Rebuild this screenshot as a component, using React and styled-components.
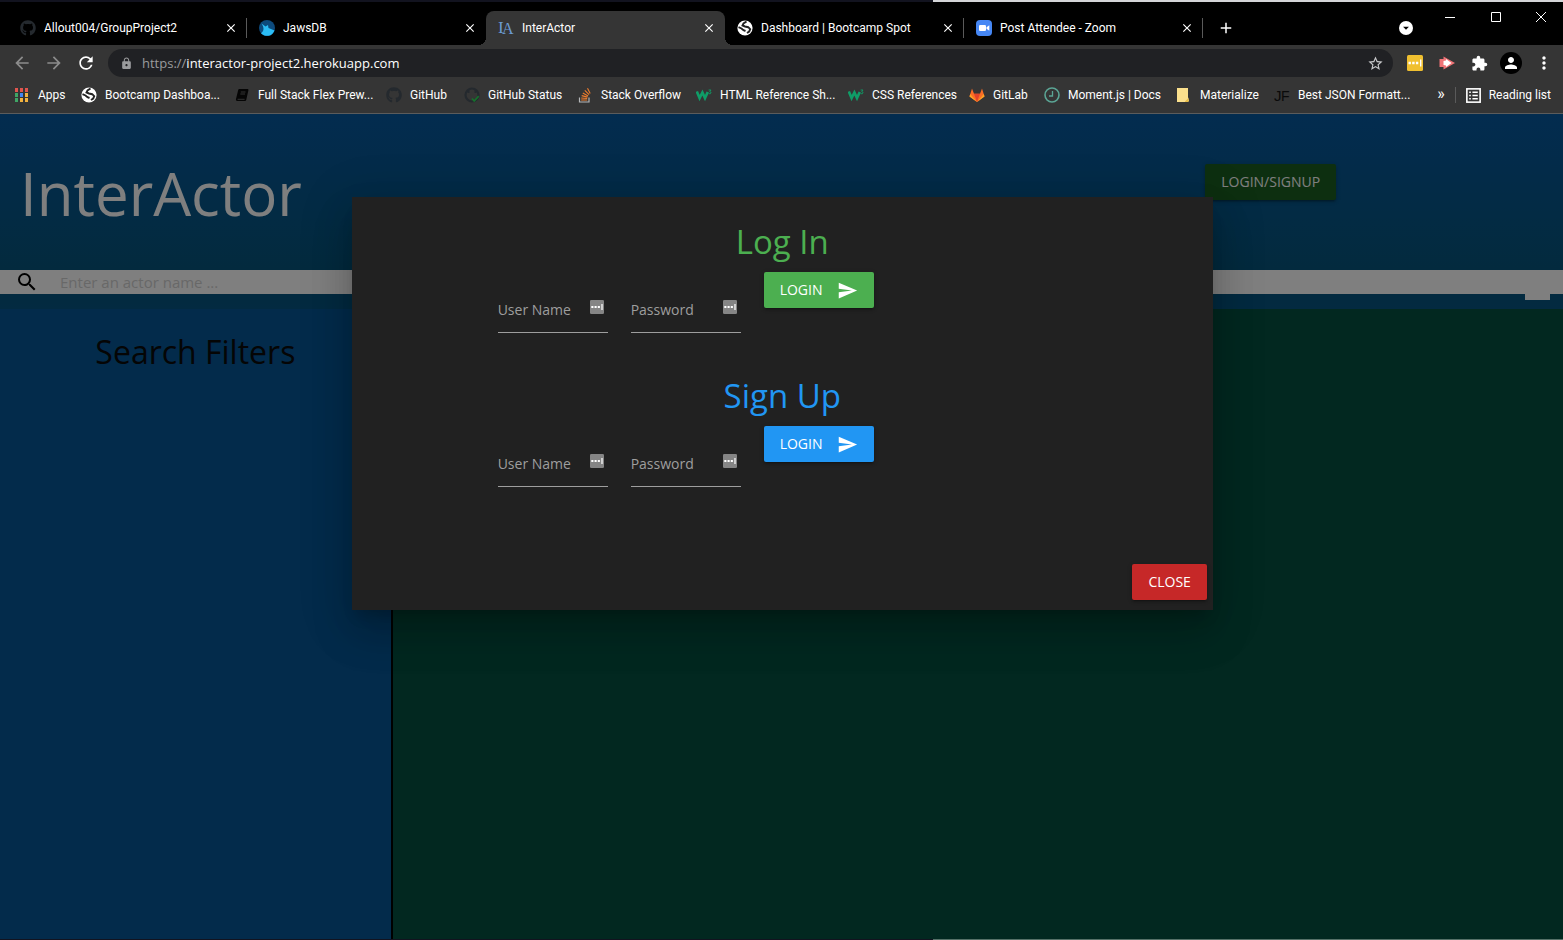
import React from "react";
import styled, { createGlobalStyle } from "styled-components";
import {
  MdArrowBack, MdArrowForward, MdRefresh, MdLock, MdStarBorder, MdExtension,
  MdPerson, MdMoreVert, MdClose, MdAdd, MdSend, MdSearch, MdArrowDropDown,
} from "react-icons/md";
import { FaGithub } from "react-icons/fa";

const GlobalStyle = createGlobalStyle`
  *, *::before, *::after { box-sizing: border-box; }
  html, body, #root { height: 100%; }
  body {
    margin: 0;
    background: #000;
    font-family: "Open Sans", "Noto Sans", sans-serif;
    overflow: hidden;
  }
  button, input { font-family: inherit; }
  button { border: 0; padding: 0; cursor: pointer; }
  a { color: inherit; text-decoration: none; }
  svg { display: block; flex: none; }
`;

const Screen = styled.div`
  display: flex;
  flex-direction: column;
  height: 100%;
`;

const EdgeStrip = styled.div`
  flex: none;
  height: ${(p) => p.$height}px;
  background: linear-gradient(to right, #12131f 59.7%, ${(p) => p.$light} 59.7%);
`;

/* ---------- browser frame ---------- */

const TabStrip = styled.div`
  display: flex;
  flex: none;
  height: 43px;
  padding: 9px 0 0 8px;
  background: #000;
`;

const Tab = styled.div`
  position: relative;
  display: flex;
  align-items: center;
  flex: 0 1 239px;
  gap: 8px;
  padding-left: 12px;
  border-radius: 8px 8px 0 0;
  background: ${(p) => (p.$active ? "#353535" : "transparent")};
  color: #fff;
  font-family: Roboto, "Open Sans", sans-serif;
  font-size: 12px;

  &::before, &::after {
    content: "";
    display: ${(p) => (p.$active ? "block" : "none")};
    position: absolute;
    bottom: 0;
    width: 8px;
    height: 8px;
  }
  &::before {
    left: -8px;
    background: radial-gradient(circle at 0 0, transparent 8px, #353535 8px);
  }
  &::after {
    right: -8px;
    background: radial-gradient(circle at 100% 0, transparent 8px, #353535 8px);
  }
`;

const TabTitle = styled.span`
  flex: 1;
  white-space: nowrap;
  overflow: hidden;
`;

const Divider = styled.span`
  flex: none;
  align-self: center;
  width: 1px;
  height: ${(p) => p.$height}px;
  background: ${(p) => (p.$hidden ? "transparent" : "#5a5a5a")};
`;

const IconButton = styled.button`
  display: flex;
  align-items: center;
  justify-content: center;
  flex: none;
  width: ${(p) => p.$width}px;
  background: transparent;
  color: ${(p) => p.$color || "#fff"};
`;

const NewTab = styled(IconButton)`
  align-self: center;
  margin-left: 11px;
`;

const WindowControls = styled.div`
  display: flex;
  align-items: center;
  margin-left: auto;
`;

const CaptionButtons = styled.div`
  display: flex;
  align-self: flex-start;
  height: 12px;
  margin-left: 14px;
`;

const TabSearch = styled.button`
  display: flex;
  align-items: center;
  justify-content: center;
  width: 14px;
  height: 14px;
  border-radius: 50%;
  background: #fff;
  color: #000;
`;

const Toolbar = styled.div`
  display: flex;
  align-items: center;
  flex: none;
  height: 36px;
  padding: 0 3px 0 6px;
  background: #353535;
`;

const AddressBar = styled.div`
  display: flex;
  align-items: center;
  flex: 1;
  height: 28px;
  margin: 0 6px;
  padding: 0 9px 0 12px;
  gap: 9px;
  border-radius: 14px;
  background: #202124;
  color: #9a9b9d;
  font-size: 13px;
`;

const Url = styled.span`
  flex: 1;
  b { color: #fff; font-weight: 400; }
`;

const Avatar = styled.span`
  display: flex;
  align-items: center;
  justify-content: center;
  width: 22px;
  height: 22px;
  border-radius: 50%;
  background: #000;
`;

const BookmarkBar = styled.nav`
  display: flex;
  align-items: center;
  flex: none;
  height: 33px;
  padding: 0 12px 4px 13px;
  border-bottom: 1px solid #5c5c5c;
  background: #353535;
  color: #fff;
  font-family: Roboto, "Open Sans", sans-serif;
  font-size: 12px;
  white-space: nowrap;
`;

const Bookmark = styled.a`
  display: flex;
  align-items: center;
  flex: none;
  gap: 8px;
  width: ${(p) => (p.$width ? `${p.$width}px` : "auto")};
`;

const BookmarkEnd = styled.div`
  display: flex;
  align-items: center;
  gap: 10px;
  margin-left: auto;
`;

const More = styled.span`
  font-size: 16px;
  line-height: 16px;
  padding-bottom: 2px;
`;

/* ---------- InterActor page ---------- */

const Page = styled.main`
  position: relative;
  display: flex;
  flex-direction: column;
  flex: 1;
`;

const Header = styled.header`
  flex: none;
  height: 195px;
  background: linear-gradient(#06589f, #06557c 156px, #065482);
`;

const Banner = styled.div`
  display: grid;
  grid-template-columns: 3fr 1fr;
  height: 156px;
  padding: 1px 0 0 20px;
  color: #fff;
`;

const SiteTitle = styled.h1`
  margin: 0;
  align-self: center;
  font-size: 60px;
  line-height: 72px;
  font-weight: 400;
`;

const BannerAction = styled.div`
  padding: 49px 0 0 28px;
`;

const SearchBar = styled.label`
  display: flex;
  align-items: center;
  height: 24px;
  padding-left: 15px;
  gap: 21px;
  background: #fff;
  color: #000;
`;

const SearchInput = styled.input`
  flex: 1;
  height: 24px;
  padding: 0;
  border: 0;
  outline: 0;
  background: transparent;
  font-size: 15px;
  &::placeholder { color: #d1d1d1; opacity: 1; }
`;

const SearchTab = styled.div`
  width: 25px;
  height: 6px;
  margin: 0 13px 0 auto;
  background: #fff;
`;

const Body = styled.div`
  display: grid;
  grid-template-columns: 1fr 3fr;
  flex: 1;
`;

const Sidebar = styled.aside`
  background: #065696;
`;

const Results = styled.section`
  border-left: 2px solid #000;
  background: #045040;
`;

const FiltersTitle = styled.h2`
  margin: 21px 0;
  font-size: 32px;
  line-height: 43px;
  font-weight: 400;
  text-align: center;
  color: #0a0a0a;
`;

const Overlay = styled.div`
  position: absolute;
  inset: 0;
  background: rgba(0, 0, 0, 0.5);
`;

const Modal = styled.div`
  display: flex;
  flex-direction: column;
  width: 55.1%;
  height: 50%;
  margin: 83px 0 0 22.5%;
  padding: 23px 6px 10px 24px;
  background: #212121;
  box-shadow: 0 24px 38px 3px rgba(0, 0, 0, 0.14),
    0 9px 46px 8px rgba(0, 0, 0, 0.12), 0 11px 15px -7px rgba(0, 0, 0, 0.2);
`;

const Form = styled.form`
  height: 154px;
  padding-right: 18px;
`;

const FormTitle = styled.h2`
  margin: 0 0 9px;
  font-size: 33px;
  line-height: 43px;
  font-weight: 400;
  text-align: center;
  color: ${(p) => p.$color};
`;

const FormRow = styled.div`
  display: flex;
  align-items: flex-start;
  gap: 23px;
  margin-left: 15%;
`;

const Field = styled.div`
  display: grid;
  grid-template: 45px / 1fr;
  width: 110px;
  margin-top: 16px;
  > * { grid-area: 1 / 1; }
`;

const FieldLabel = styled.label`
  margin-top: 12px;
  color: #9e9e9e;
  font-size: 14px;
  line-height: 20px;
  pointer-events: none;
`;

const FieldInput = styled.input`
  width: 100%;
  height: 45px;
  padding: 0;
  border: 0;
  border-bottom: 1px solid #9e9e9e;
  outline: 0;
  background: transparent;
  color: #fff;
  font-size: 14px;
`;

const FieldIcon = styled.span`
  justify-self: end;
  margin: 12px 4px 0 0;
`;

const Button = styled.button`
  display: inline-flex;
  align-items: center;
  gap: 15px;
  height: 36px;
  padding: 0 16px;
  border-radius: 2px;
  background: ${(p) => p.$color};
  box-shadow: 0 2px 2px 0 rgba(0, 0, 0, 0.14),
    0 3px 1px -2px rgba(0, 0, 0, 0.12), 0 1px 5px 0 rgba(0, 0, 0, 0.2);
  color: #fff;
  font-size: 14px;
  font-weight: 500;
  line-height: 20px;
  text-transform: uppercase;
`;

const ModalFooter = styled.div`
  display: flex;
  justify-content: flex-end;
  margin-top: auto;
`;

/* ---------- icons ---------- */

const JawsIcon = () => (
  <svg width="16" height="16" viewBox="0 0 16 16">
    <circle cx="8" cy="8" r="8" fill="#0d4a7c" />
    <path d="M2.500 3.500 6.500 6.500 9 5l.5 3 6 2.500A8 8 0 0 1 2 13.200C5 11 5.500 8 2.500 3.500Z" fill="#2bbcf5" />
  </svg>
);

const GlobeIcon = ({ size = 15 }) => (
  <svg width={size} height={size} viewBox="0 0 16 16">
    <circle cx="8" cy="8" r="7.600" fill="#fff" />
    <path d="M9.500 1.500 6.500 3.500 5.500 5.500l2.500 1 3.200.7 2 2-1 2.300-2.200 1.500M1.500 7.200l3 1.300 2 1.700L8.500 11" fill="none" stroke="#222" strokeWidth="1.900" />
  </svg>
);

const ActorIcon = () => (
  <svg width="16" height="26" viewBox="0 0 16 26" fill="#6c9bd2" fontFamily="Liberation Serif, serif">
    <text x="0" y="18" fontSize="17">I</text>
    <text x="4" y="19" fontSize="16">A</text>
  </svg>
);

const FormatterIcon = () => (
  <svg width="16" height="24" viewBox="0 0 16 24" fill="#0a0a0a" fontFamily="Liberation Sans, sans-serif">
    <text x="0" y="18" fontSize="15">J</text>
    <text x="7" y="18" fontSize="14">F</text>
  </svg>
);

const ZoomIcon = () => (
  <svg width="16" height="16" viewBox="0 0 16 16">
    <rect width="16" height="16" rx="4" fill="#4687f4" />
    <rect x="3" y="5" width="7" height="6" rx="1.300" fill="#fff" />
    <path d="m10.500 7.200 2.800-1.900v5.400l-2.800-1.900Z" fill="#fff" />
  </svg>
);

const AppsIcon = () => {
  const colors = ["#e0554e", "#e0554e", "#e0554e", "#3fa565", "#4285f4", "#f3b23e", "#3fa565", "#f3b23e", "#f3b23e"];
  return (
    <svg width="17" height="16" viewBox="0 0 17 16">
      {colors.map((c, i) => (
        <rect key={i} x={2 + (i % 3) * 5} y={1 + Math.floor(i / 3) * 5} width="3" height="4" fill={c} />
      ))}
    </svg>
  );
};

const BookIcon = () => (
  <svg width="15" height="16" viewBox="0 0 15 16">
    <path d="M4.300 2h8.200q1.200 0 .9 1.200L11.200 13q-.3 1-1.300 1H2q-1.600-.3-1-2L3.200 3q.2-1 1.100-1Z" fill="#050505" />
    <path d="M5.800 5h4.700M5.300 7h4.700M2.600 12.300h7" fill="none" stroke="#3f3f3f" strokeWidth=".8" />
  </svg>
);

const StatusIcon = () => (
  <svg width="16" height="16" viewBox="0 0 16 16">
    <circle cx="8" cy="8" r="6.500" fill="none" stroke="#24292e" strokeWidth="2.200" />
    <path d="M4.500 3v3M11.500 3v3" stroke="#24292e" strokeWidth="2" />
    <path d="m8 11.500 2.200 2.500 4.500-4.800" fill="none" stroke="#176f2c" strokeWidth="1.800" />
  </svg>
);

const StackIcon = () => (
  <svg width="15" height="16" viewBox="0 0 15 16">
    <path d="M1.500 10.500V15h9.500v-4.500" fill="none" stroke="#b5b7b9" strokeWidth="1.200" />
    <path d="M3.200 13h6M3.200 11l6 .5M3.700 8.600l5.800 1.500M4.800 6l5.300 2.900M6.800 3.400l4.300 4.200M9.500 1.300l2.700 5.300" stroke="#ef7d2d" strokeWidth="1.100" />
  </svg>
);

const SchoolsIcon = () => (
  <svg width="16" height="16" viewBox="0 0 16 16">
    <path d="M.8 4.500 3.600 11 6.400 5.500 9 11l2.800-6" fill="none" stroke="#0f9d67" strokeWidth="2.700" />
    <path d="M12.600 3H15l-1.300 1.700q1.500.1 1.300 1.200-.3 1.300-2.200.8" fill="none" stroke="#0f9d67" strokeWidth=".9" />
  </svg>
);

const GitLabIcon = () => (
  <svg width="16" height="16" viewBox="0 0 16 16">
    <path d="M8 15 .5 9.400 3 1.500l2 5.300h6l2-5.300 2.500 7.900Z" fill="#fc6d26" />
    <path d="M8 15 5 6.800h6Z" fill="#e24329" />
    <path d="M8 15 .5 9.400l.7-2.300Zm0 0 7.500-5.600-.7-2.300Z" fill="#fca326" />
  </svg>
);

const ClockIcon = () => (
  <svg width="16" height="16" viewBox="0 0 16 16">
    <circle cx="8" cy="8" r="7" fill="none" stroke="#5ba595" strokeWidth="1.600" />
    <path d="M8.500 4v5H5" fill="none" stroke="#5ba595" strokeWidth="1.300" />
  </svg>
);

const NoteIcon = () => (
  <svg width="16" height="16" viewBox="0 0 16 16">
    <path d="M1 1h11v9l1 4-2 1H1Z" fill="#fbe08d" />
    <path d="m9 14.500 3.500-3.500v4H9Z" fill="#e8bd48" />
  </svg>
);

const ReadingIcon = () => (
  <svg width="15" height="15" viewBox="0 0 14 14" fill="none" stroke="#fff">
    <rect x=".8" y=".8" width="12.400" height="12.400" strokeWidth="1.500" />
    <path d="M3 4h1.500M3 7h1.500M3 10h1.500M6 4h5M6 7h5M6 10h5" strokeWidth="1.400" />
  </svg>
);

const KeyDots = ({ size, fill }) => (
  <svg width={size} height={size} viewBox="0 0 16 16">
    <rect width="16" height="16" rx="1.500" fill={fill} />
    <path d="M1.500 6.800h2.400v2.400H1.500Zm3.700 0h2.400v2.400H5.200Zm3.700 0h2.400v2.400H8.900ZM13 4.500h1.400v7H13Z" fill="#fff" />
  </svg>
);

const CastIcon = () => (
  <svg width="17" height="16" viewBox="0 0 17 16">
    <path d="M.5 4h4V1.500L16 8 4.500 14.500V12h-4Z" fill="#ee7376" />
    <path d="M4.500 6 7 5.500V4l5.500 4L7 12v-1.500L4.500 10Z" fill="#fff" />
  </svg>
);

const github = <FaGithub size={16} color="#24292e" />;

const tabs = [
  { title: "Allout004/GroupProject2", icon: github, divider: true },
  { title: "JawsDB", icon: <JawsIcon /> },
  { title: "InterActor", icon: <ActorIcon />, active: true },
  { title: "Dashboard | Bootcamp Spot", icon: <GlobeIcon size={16} />, divider: true },
  { title: "Post Attendee - Zoom", icon: <ZoomIcon />, divider: true },
];

const bookmarks = [
  { title: "Apps", icon: <AppsIcon />, width: 68 },
  { title: "Bootcamp Dashboa...", icon: <GlobeIcon size={16} />, width: 154 },
  { title: "Full Stack Flex Prew...", icon: <BookIcon />, width: 151 },
  { title: "GitHub", icon: github, width: 78 },
  { title: "GitHub Status", icon: <StatusIcon />, width: 114 },
  { title: "Stack Overflow", icon: <StackIcon />, width: 118 },
  { title: "HTML Reference Sh...", icon: <SchoolsIcon />, width: 152 },
  { title: "CSS References", icon: <SchoolsIcon />, width: 121 },
  { title: "GitLab", icon: <GitLabIcon />, width: 75 },
  { title: "Moment.js | Docs", icon: <ClockIcon />, width: 132 },
  { title: "Materialize", icon: <NoteIcon />, width: 98 },
  { title: "Best JSON Formatt...", icon: <FormatterIcon /> },
];

const CredentialsForm = ({ id, title, color }) => (
  <Form>
    <FormTitle $color={color}>{title}</FormTitle>
    <FormRow>
      {["User Name", "Password"].map((name, i) => (
        <Field key={name}>
          <FieldInput id={`${id}-${i}`} type={i ? "password" : "text"} />
          <FieldLabel htmlFor={`${id}-${i}`}>{name}</FieldLabel>
          <FieldIcon><KeyDots size={14} fill="#858585" /></FieldIcon>
        </Field>
      ))}
      <Button type="button" $color={color}>
        Login <MdSend size={21} />
      </Button>
    </FormRow>
  </Form>
);

export default function App() {
  return (
    <Screen>
      <GlobalStyle />
      <EdgeStrip $height={2} $light="#d4d5d8" />
      <TabStrip>
        {tabs.map((t) => (
          <Tab key={t.title} $active={t.active}>
            {t.icon}
            <TabTitle>{t.title}</TabTitle>
            <IconButton aria-label="Close tab" $width={14}><MdClose size={14} /></IconButton>
            <Divider $height={20} $hidden={!t.divider} />
          </Tab>
        ))}
        <NewTab aria-label="New tab" $width={24}><MdAdd size={18} /></NewTab>
        <WindowControls>
          <TabSearch aria-label="Search tabs"><MdArrowDropDown size={14} /></TabSearch>
          <CaptionButtons>
            <IconButton aria-label="Minimize" $width={46}>
              <svg width="12" height="12" stroke="#fff"><path d="M1 6.500h10" /></svg>
            </IconButton>
            <IconButton aria-label="Maximize" $width={46}>
              <svg width="12" height="12" fill="none" stroke="#fff"><path d="M1.500 1.500h9v9h-9Z" /></svg>
            </IconButton>
            <IconButton aria-label="Close" $width={44}>
              <svg width="12" height="12" stroke="#fff"><path d="m1 1 10 10M11 1 1 11" /></svg>
            </IconButton>
          </CaptionButtons>
        </WindowControls>
      </TabStrip>
      <Toolbar>
        <IconButton aria-label="Back" $width={32} $color="#8c8c8c"><MdArrowBack size={20} /></IconButton>
        <IconButton aria-label="Forward" $width={32} $color="#8c8c8c"><MdArrowForward size={20} /></IconButton>
        <IconButton aria-label="Reload" $width={32}><MdRefresh size={20} /></IconButton>
        <AddressBar>
          <MdLock size={13} />
          <Url>https://<b>interactor-project2.herokuapp.com</b></Url>
          <MdStarBorder size={17} color="#c8c9cb" />
        </AddressBar>
        <IconButton aria-label="Password manager" $width={32}><KeyDots size={16} fill="#f0c030" /></IconButton>
        <IconButton aria-label="Cast" $width={32}><CastIcon /></IconButton>
        <IconButton aria-label="Extensions" $width={32}><MdExtension size={17} /></IconButton>
        <IconButton aria-label="Profile" $width={32}><Avatar><MdPerson size={18} /></Avatar></IconButton>
        <IconButton aria-label="Menu" $width={33}><MdMoreVert size={20} /></IconButton>
      </Toolbar>
      <BookmarkBar>
        {bookmarks.map((b) => (
          <Bookmark key={b.title} href="#" $width={b.width}>{b.icon}{b.title}</Bookmark>
        ))}
        <BookmarkEnd>
          <More>»</More>
          <Divider $height={16} />
          <Bookmark href="#"><ReadingIcon />Reading list</Bookmark>
        </BookmarkEnd>
      </BookmarkBar>
      <Page>
        <Header>
          <Banner>
            <SiteTitle>InterActor</SiteTitle>
            <BannerAction><Button $color="#1b5e20">Login/Signup</Button></BannerAction>
          </Banner>
          <SearchBar>
            <MdSearch size={24} />
            <SearchInput aria-label="Actor name" placeholder="Enter an actor name ..." />
          </SearchBar>
          <SearchTab />
        </Header>
        <Body>
          <Sidebar><FiltersTitle>Search Filters</FiltersTitle></Sidebar>
          <Results />
        </Body>
        <Overlay>
          <Modal role="dialog">
            <CredentialsForm id="login" title="Log In" color="#4caf50" />
            <CredentialsForm id="signup" title="Sign Up" color="#2196f3" />
            <ModalFooter><Button $color="#c62828">Close</Button></ModalFooter>
          </Modal>
        </Overlay>
      </Page>
      <EdgeStrip $height={1} $light="#567168" />
    </Screen>
  );
}
